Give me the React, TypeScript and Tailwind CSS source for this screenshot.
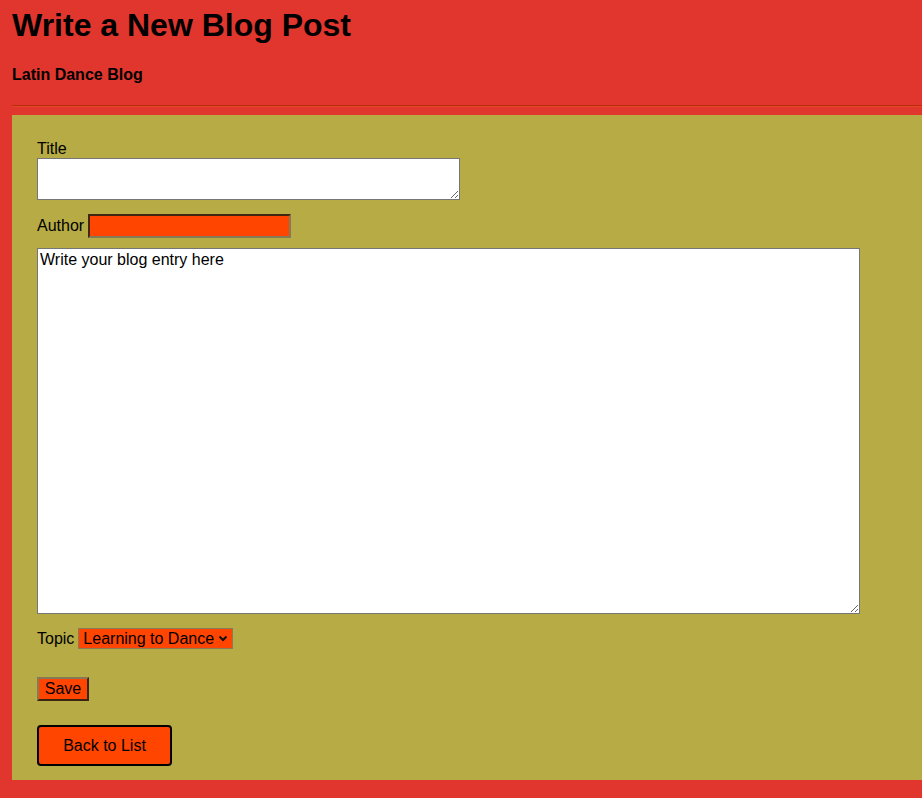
import { useState } from "react";

export default function App() {
    const [topic, setTopic] = useState("Learning to Dance");

    return (
        <div className="min-h-screen bg-[#e0362e] pl-[12px] pt-[7px] pb-[18px] font-['Liberation_Sans',Arial,sans-serif] text-black">
            <h1 className="text-[32px] leading-[37px] font-bold">Write a New Blog Post</h1>
            <h3 className="mt-[22px] text-[16px] leading-[18px] font-bold">Latin Dance Blog</h3>
            <hr className="mt-[21px] border-0 h-[2px] bg-[#e4491f] border-t border-t-[#b82a12]" />

            <form className="mt-[8px] bg-[#b6ab44] pl-[25px] pt-[24px] pb-[14px] flex flex-col items-start text-[16px] leading-[18px]">
                <label htmlFor="title" className="leading-[19px]">Title</label>
                <textarea
                    id="title"
                    rows={2}
                    className="w-[423px] h-[42px] bg-white border border-[#767676] px-[2px] py-[2px]"
                />

                <div className="mt-[14px] flex items-center gap-[4px]">
                    <label htmlFor="author">Author</label>
                    <input
                        id="author"
                        type="text"
                        className="w-[203px] h-[24px] bg-[#ff4500] border-2 border-t-[#402812] border-l-[#402812] border-b-[#857a55] border-r-[#857a55] px-[2px]"
                    />
                </div>

                <textarea
                    defaultValue="Write your blog entry here"
                    className="mt-[10px] w-[823px] h-[366px] bg-white border border-[#767676] px-[2px] py-[2px]"
                />

                <div className="mt-[14px] flex items-center gap-[4px]">
                    <label htmlFor="topic">Topic</label>
                    <div className="relative">
                        <select
                            id="topic"
                            value={topic}
                            onChange={(e) => setTopic(e.target.value)}
                            className="appearance-none w-[155px] h-[21px] bg-[#ff4500] border border-[#8a7a55] pl-[4px] pr-[18px] leading-[19px]"
                        >
                            <option>Learning to Dance</option>
                            <option>Salsa</option>
                            <option>Bachata</option>
                            <option>Merengue</option>
                        </select>
                        <svg
                            className="absolute right-[5px] top-[7px] pointer-events-none"
                            width="10"
                            height="7"
                            viewBox="0 0 10 7"
                            fill="none"
                        >
                            <path d="M1.5 1.5 L5 5 L8.5 1.5" stroke="#111" strokeWidth="2" />
                        </svg>
                    </div>
                </div>

                <button
                    type="button"
                    className="mt-[28px] h-[24px] w-[52px] bg-[#ff4500] border-2 border-t-[#857a55] border-l-[#857a55] border-b-[#3a2412] border-r-[#3a2412] leading-[18px]"
                >
                    Save
                </button>

                <button
                    type="button"
                    className="mt-[24px] h-[41px] w-[135px] bg-[#ff4500] border-2 border-black rounded-[4px]"
                >
                    Back to List
                </button>
            </form>
        </div>
    );
}
